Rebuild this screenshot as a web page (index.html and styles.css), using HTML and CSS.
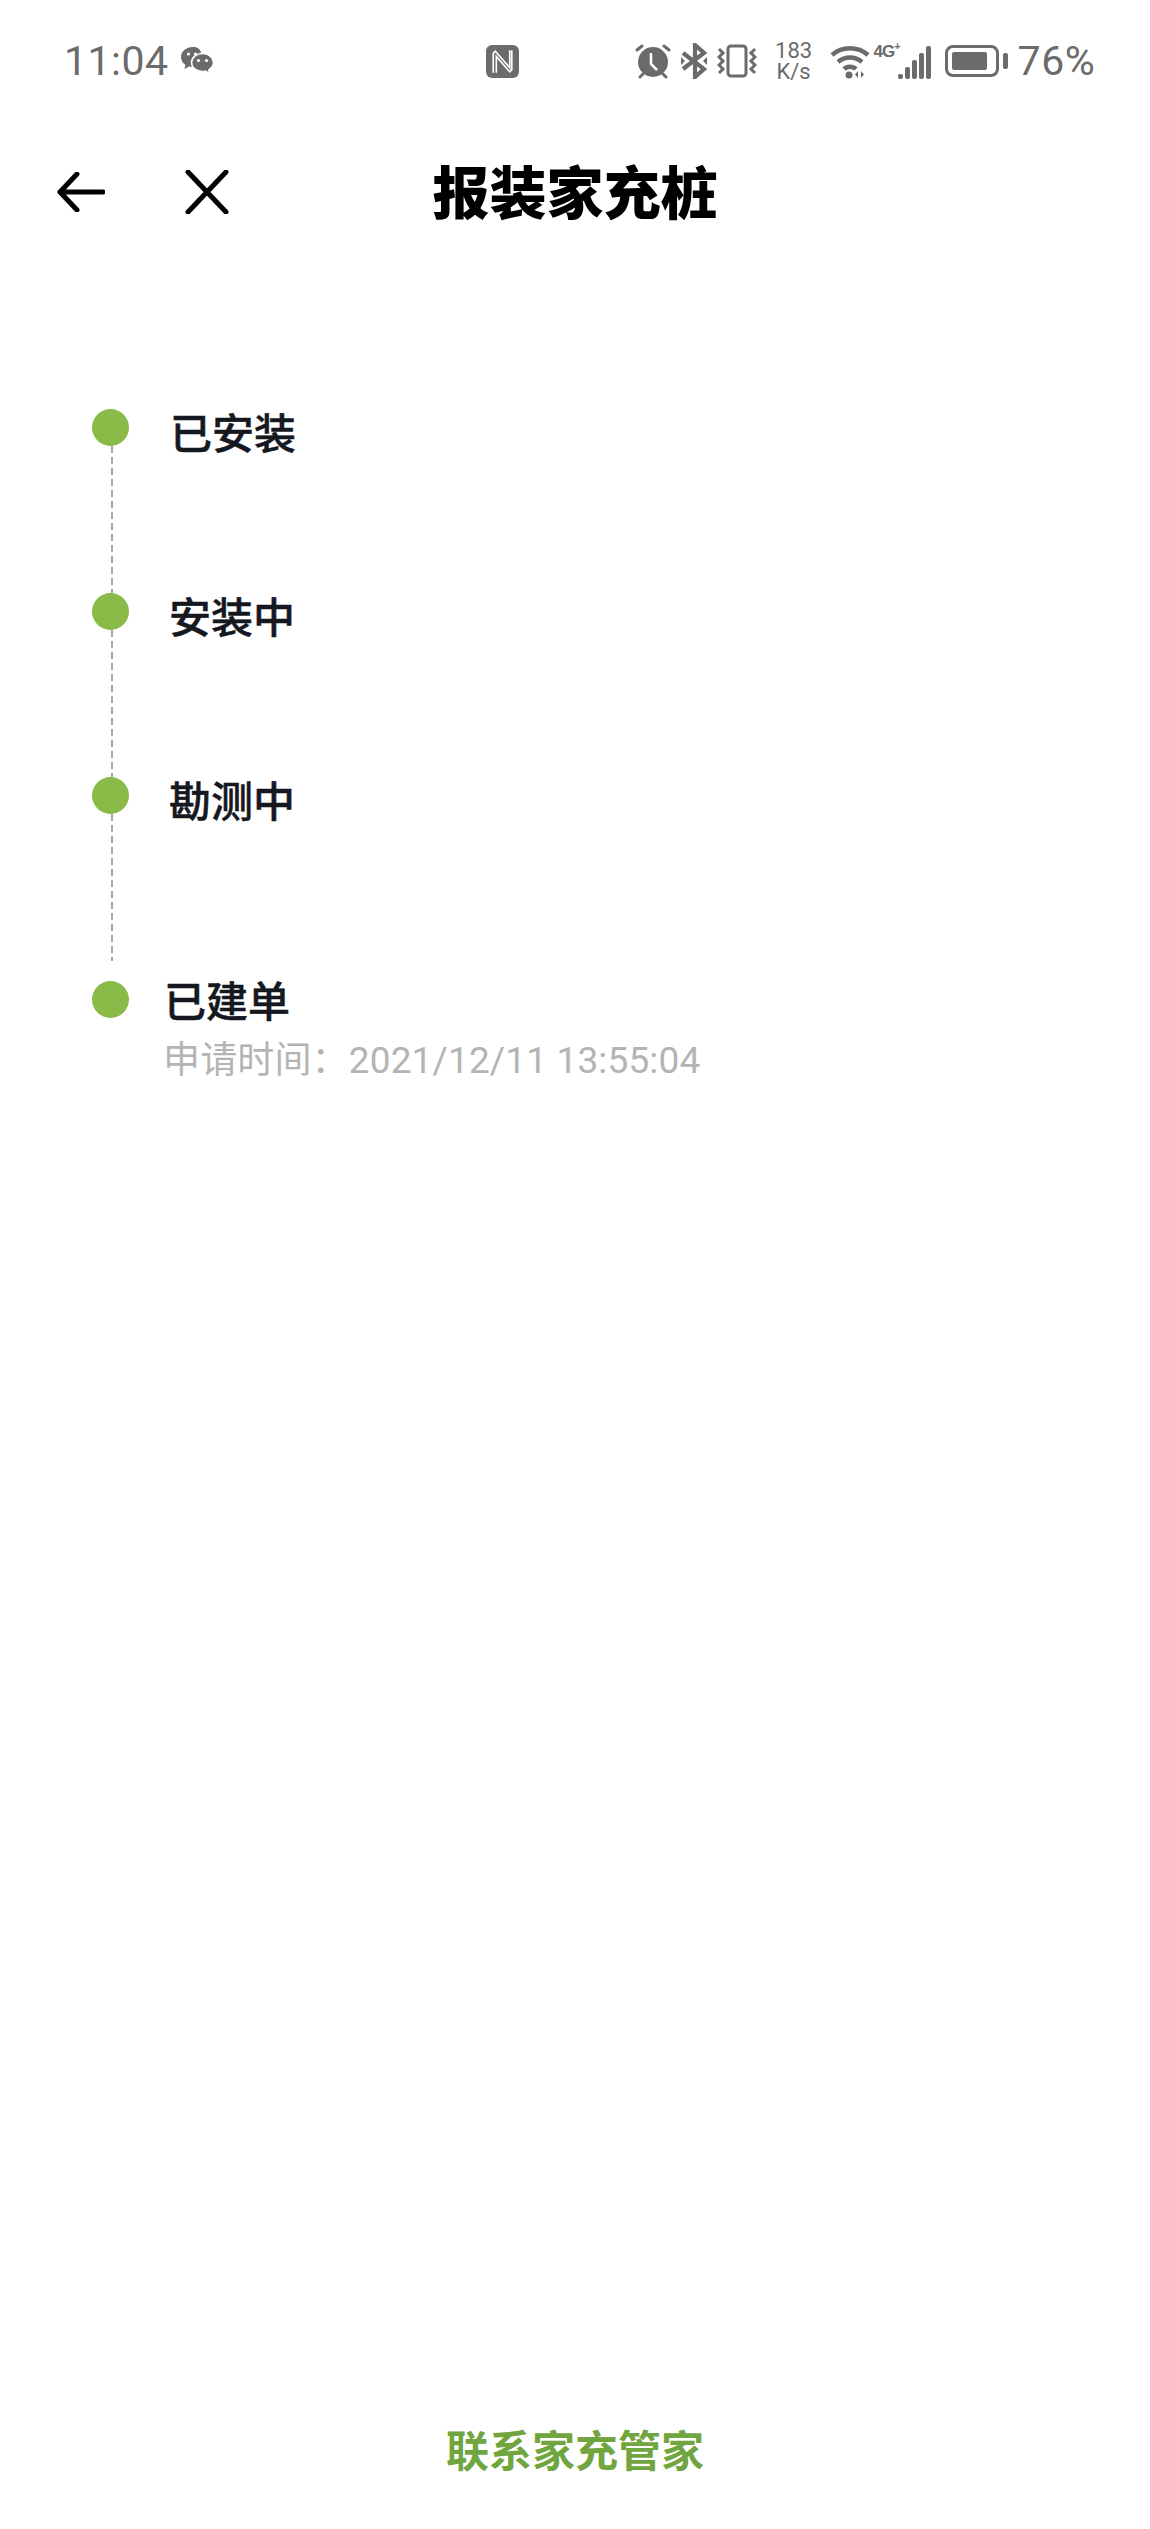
FILE: index.html
```html
<!DOCTYPE html>
<html lang="zh-CN">
<head>
    <meta charset="UTF-8">
    <title>报装家充桩</title>
    <link rel="stylesheet" href="styles.css">
</head>
<body>
    <div class="page">
        <div class="status-bar">
            <span class="clock">11:04</span>
            <svg class="ic-wechat" viewBox="0 0 34 30" width="34" height="30">
                <path d="M13 1C6 1 1 5.500 1 11c0 3.200 1.700 6 4.300 7.800L4.500 23l4.500-2.500c1.200.3 2.500.5 4 .5 1 0 2-.1 3-.3l5-14C20.500 3 17 1 13 1z" fill="#6b6b6b"/>
                <path d="M22.500 7.500C16.500 7.500 11.500 11.500 11.500 16.500s5 9 11 9c1 0 2-.1 3-.4l4 2.400-.7-3.700C31.500 22 33.500 19.500 33.500 16.500c0-5-5-9-11-9z" fill="#6b6b6b" stroke="#fff" stroke-width="1.500"/>
                <circle cx="8.500" cy="8" r="1.600" fill="#fff"/>
                <circle cx="15.500" cy="8" r="1.600" fill="#fff"/>
                <circle cx="18.500" cy="14.500" r="1.600" fill="#fff"/>
                <circle cx="26.500" cy="14.500" r="1.600" fill="#fff"/>
            </svg>
            <svg class="ic-nfc" viewBox="0 0 32 32" width="33" height="33">
                <rect width="32" height="32" rx="6" fill="#6b6b6b"/>
                <path d="M7 27V8l2-2 14 16V5M10 27V11l13 15 2-2V5" fill="none" stroke="#fff" stroke-width="1.600"/>
            </svg>
            <svg class="ic-alarm" viewBox="0 0 36 36" width="36" height="36">
                <circle cx="18" cy="19" r="15" fill="#6b6b6b"/>
                <path d="M2 7l5-4M34 7l-5-4M5 34l3-3M31 34l-3-3" stroke="#6b6b6b" stroke-width="3" stroke-linecap="round"/>
                <path d="M16 10v11l6 6" fill="none" stroke="#fff" stroke-width="2.500"/>
            </svg>
            <svg class="ic-bt" viewBox="0 0 28 36" width="28" height="36">
                <path d="M3 10l21 16-9 8V2l9 8L3 26" fill="none" stroke="#6b6b6b" stroke-width="4.200"/>
                <path d="M1 14v8l4-4zM27 14v8l-4-4z" fill="#6b6b6b"/>
            </svg>
            <svg class="ic-vibrate" viewBox="0 0 40 34" width="40" height="34">
                <rect x="11" y="2" width="18" height="30" rx="3" fill="none" stroke="#6b6b6b" stroke-width="3"/>
                <path d="M2 5l4 4-4 4 4 4-4 4 4 4-4 4M38 5l-4 4 4 4-4 4 4 4-4 4 4 4" fill="none" stroke="#6b6b6b" stroke-width="3"/>
            </svg>
            <span class="speed">183<br>K/s</span>
            <svg class="ic-wifi" viewBox="0 0 40 36" width="40" height="36">
                <path d="M2 12c10-9 26-9 36 0M8 19c7-6 17-6 24 0M14 26c3-3 9-3 12 0" fill="none" stroke="#6b6b6b" stroke-width="4.500"/>
                <circle cx="19" cy="32" r="3.500" fill="#6b6b6b"/>
                <path d="M28 28v7l-3-3.500zM31 28v7l3-3.500z" fill="#6b6b6b"/>
            </svg>
            <div class="net">
                <span class="net-label">4G<sup>+</sup></span>
                <div class="signal">
                    <i class="bar-1"></i><i class="bar-2"></i><i class="bar-3"></i><i class="bar-4"></i><i class="bar-5"></i>
                </div>
            </div>
            <div class="battery">
                <div class="battery-body"><div class="battery-level"></div></div>
                <div class="battery-cap"></div>
            </div>
            <span class="percent">76%</span>
        </div>

        <div class="title-bar">
            <svg class="ic-back" viewBox="0 0 48 40" width="48" height="40">
                <path d="M46 20H3M20 2L3 20l17 18" fill="none" stroke="#000" stroke-width="5" stroke-linejoin="round" stroke-linecap="round"/>
            </svg>
            <svg class="ic-close" viewBox="0 0 44 44" width="44" height="44">
                <path d="M3 2l38 40M41 2L3 42" fill="none" stroke="#000" stroke-width="5" stroke-linecap="round"/>
            </svg>
            <h1 class="title">报装家充桩</h1>
        </div>

        <ul class="timeline">
            <li class="step">
                <div class="rail"><span class="dot"></span><span class="dash"></span></div>
                <div class="step-name">已安装</div>
            </li>
            <li class="step">
                <div class="rail"><span class="dot"></span><span class="dash"></span></div>
                <div class="step-name shift-1">安装中</div>
            </li>
            <li class="step step-long">
                <div class="rail"><span class="dot"></span><span class="dash"></span></div>
                <div class="step-name shift-1">勘测中</div>
            </li>
            <li class="step step-last">
                <div class="rail"><span class="dot"></span></div>
                <div class="shift-2">
                    <div class="step-name">已建单</div>
                    <div class="step-time">申请时间：2021/12/11 13:55:04</div>
                </div>
            </li>
        </ul>

        <div class="footer">联系家充管家</div>
    </div>
</body>
</html>
```

FILE: styles.css
```css
* {
    box-sizing: border-box;
}

body {
    margin: 0;
    background-color: #fff;
    font-family: "Noto Sans CJK SC", "Noto Sans", sans-serif;
}

.page {
    width: 1150px;
    height: 2529px;
    display: flex;
    flex-direction: column;
}

/* status bar */
.status-bar {
    height: 60px;
    margin-top: 31px;
    padding-left: 64px;
    display: flex;
    align-items: center;
    color: #6b6b6b;
}

.clock {
    font-family: Roboto, sans-serif;
    font-size: 41px;
    letter-spacing: 0.5px;
}

.ic-wechat { margin-left: 11px; }
.ic-nfc { margin-left: 272px; }
.ic-alarm { margin-left: 116px; }
.ic-bt { margin-left: 9px; }
.ic-vibrate { margin-left: 9px; }

.speed {
    margin-left: 16px;
    width: 42px;
    font-family: Roboto, sans-serif;
    font-size: 22px;
    line-height: 21px;
    text-align: center;
}

.ic-wifi { margin-left: 15px; }

.net {
    margin-left: 3px;
    width: 58px;
    height: 36px;
    position: relative;
}

.net-label {
    font-family: "Liberation Sans", sans-serif;
    font-size: 17px;
    font-weight: bold;
    letter-spacing: -1px;
    position: absolute;
    left: 1px;
    top: -3px;
}

.net-label sup {
    font-size: 11px;
}

.signal {
    height: 33px;
    display: flex;
    align-items: flex-end;
    justify-content: flex-end;
    gap: 2px;
    position: absolute;
    right: 0;
    bottom: 0;
}

.signal i {
    width: 5px;
    background-color: #6b6b6b;
    border-radius: 2px;
}

.bar-1 { height: 5px; }
.bar-2 { height: 12px; }
.bar-3 { height: 19px; }
.bar-4 { height: 26px; }
.bar-5 { height: 33px; }

.battery {
    margin-left: 14px;
    display: flex;
    align-items: center;
    gap: 4px;
}

.battery-body {
    width: 54px;
    height: 32px;
    padding: 4px;
    border: 3px solid #6b6b6b;
    border-radius: 8px;
}

.battery-level {
    width: 35px;
    height: 100%;
    background-color: #6b6b6b;
    border-radius: 2px;
}

.battery-cap {
    width: 5px;
    height: 16px;
    background-color: #6b6b6b;
    border-radius: 2px;
}

.percent {
    margin-left: 10px;
    font-family: Roboto, sans-serif;
    font-size: 41px;
    letter-spacing: 0.5px;
}

/* title */
.title-bar {
    height: 116px;
    margin-top: 43px;
    padding-left: 57px;
    display: flex;
    align-items: center;
    position: relative;
}

.ic-close {
    margin-left: 80px;
}

.title {
    margin: 0;
    font-size: 57px;
    font-weight: 900;
    color: #000;
    position: absolute;
    left: 0;
    right: 0;
    top: -3px;
    text-align: center;
    line-height: 116px;
}

/* timeline */
.timeline {
    list-style: none;
    margin: 0;
    padding: 0 0 0 92px;
    margin-top: 159px;
}

.step {
    height: 184px;
    display: flex;
}

.step-long {
    height: 204px;
}

.rail {
    width: 37px;
    display: flex;
    flex-direction: column;
    align-items: center;
}

.dot {
    width: 37px;
    height: 37px;
    flex-shrink: 0;
    border-radius: 50%;
    background-color: #8abb48;
}

.dash {
    width: 2px;
    flex: 1;
    margin-left: 3px;
    background-image: repeating-linear-gradient(to bottom, #a8a8a8 0, #a8a8a8 7px, transparent 7px, transparent 11px);
}

.step-long .dash {
    margin-bottom: 20px;
}

.step-name {
    margin-left: 41px;
    margin-top: -4px;
    font-size: 42px;
    line-height: 52px;
    font-weight: 500;
    -webkit-text-stroke: 0.5px #15181f;
    color: #15181f;
}

.shift-1 {
    margin-left: 40px;
}

.shift-2 {
    margin-left: 35px;
}

.shift-2 .step-name {
    margin-left: 0;
    margin-top: -8px;
}

.step-time {
    margin-top: 14px;
    margin-left: -1px;
    font-family: Roboto, "Noto Sans CJK SC", sans-serif;
    font-size: 37px;
    line-height: 44px;
    letter-spacing: 0.15px;
    color: #b4b4b4;
}

/* bottom link */
.footer {
    margin-top: auto;
    margin-bottom: 53px;
    font-size: 43px;
    line-height: 56px;
    font-weight: 700;
    text-align: center;
    color: #70a540;
}
```
